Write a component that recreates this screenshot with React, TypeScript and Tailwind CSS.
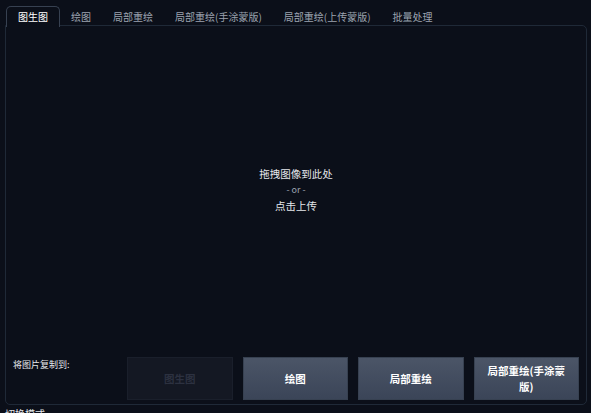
import React from "react";

const tabs = ["图生图", "绘图", "局部重绘", "局部重绘(手涂蒙版)", "局部重绘(上传蒙版)", "批量处理"];

const btn =
  "flex-1 basis-0 min-w-0 h-[43px] flex items-center justify-center border border-[#374151] bg-gradient-to-b from-[#4b5567] to-[#3b4558] text-[10.5px] font-bold text-white leading-[16px] text-center px-[10px]";

export default function App() {
  return (
    <div
      className="w-[591px] h-[413px] overflow-hidden bg-[#0b0f19] text-[#e5e7eb]"
      style={{ fontFamily: '"Noto Sans CJK SC", "Noto Sans", sans-serif' }}
    >
      <div className="flex pl-[6px] pt-[6px] h-[26px]">
        {tabs.map((t, i) =>
          i === 0 ? (
            <div
              key={t}
              className="relative z-10 flex items-center h-[21px] px-[11px] border border-b-0 border-[#374151] rounded-t-[5px] bg-[#0b0f19] text-[10px] text-white leading-none"
            >
              {t}
            </div>
          ) : (
            <div key={t} className="flex items-center h-[21px] px-[11px] text-[10px] text-[#9ca3af] leading-none">
              {t}
            </div>
          )
        )}
      </div>
      <div className="ml-[5px] mr-[4px] -mt-px h-[380px] border border-[#1f2937] rounded-b-[5px] rounded-tr-[5px] flex flex-col">
        <div className="flex-1 flex flex-col items-center justify-center pb-[4px]">
          <div className="text-[10.5px] leading-[16px] text-[#e5e7eb]">拖拽图像到此处</div>
          <div className="text-[9px] leading-[16px] text-[#9ca3af]">- or -</div>
          <div className="text-[10.5px] leading-[16px] text-[#e5e7eb]">点击上传</div>
        </div>
        <div className="flex pl-[7px] pr-[7px] pb-[4px]">
          <div className="w-[114px] text-[9px] leading-[14px] pt-[1px] text-[#e5e7eb]">将图片复制到:</div>
          <div className="flex-1 flex gap-[10px]">
            <div className="flex-1 basis-0 min-w-0 h-[43px] flex items-center justify-center border border-[#1a1f2b] bg-[#141823] text-[10.5px] font-bold text-[#2c3140] leading-[16px] text-center px-[10px]">
              图生图
            </div>
            <div className={btn}>绘图</div>
            <div className={btn}>局部重绘</div>
            <div className={btn}>局部重绘(手涂蒙版)</div>
          </div>
        </div>
      </div>
      <div className="pl-[5px] pt-[3px] text-[10px] leading-[12px] text-[#e5e7eb]">切换模式</div>
    </div>
  );
}
